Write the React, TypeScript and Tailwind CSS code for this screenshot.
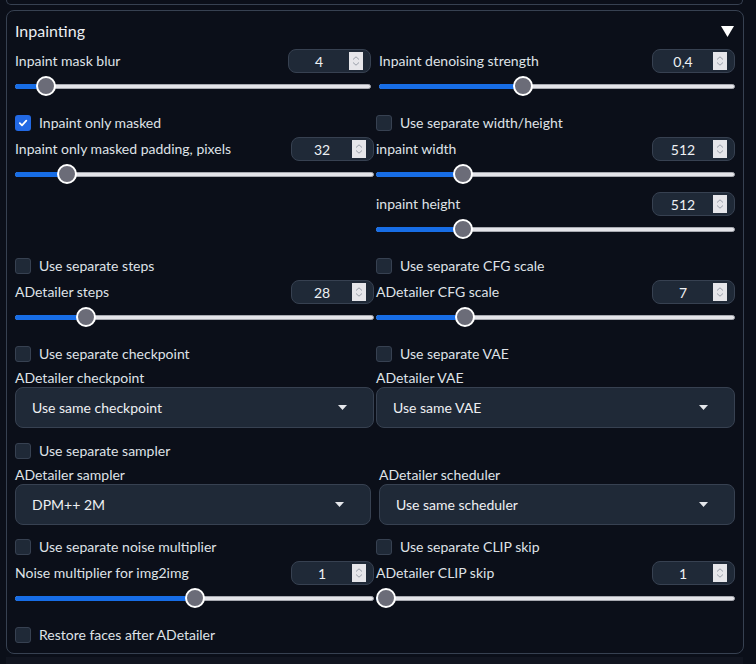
import React from "react";

const font = { fontFamily: "Lato, 'Liberation Sans', sans-serif" };

function Check({ label, checked = false }: { label: string; checked?: boolean }) {
  return (
    <div className="flex items-center h-4 gap-2">
      {checked ? (
        <div className="w-4 h-4 rounded-[3px] bg-[#2269e4] flex items-center justify-center">
          <svg width="10" height="10" viewBox="0 0 10 10">
            <path d="M1.8 5.2 L4 7.3 L8.3 2.6" stroke="white" strokeWidth="1.8" fill="none" strokeLinecap="round" strokeLinejoin="round" />
          </svg>
        </div>
      ) : (
        <div className="w-4 h-4 rounded-[3px] bg-[#1f2937] border border-[#374151]" />
      )}
      <span className="text-[14px] leading-none text-[#dfe2e7]">{label}</span>
    </div>
  );
}

function NumBox({ value }: { value: string }) {
  return (
    <div className="w-[83px] h-6 rounded-lg bg-[#1f2937] border border-[#374151] flex items-center pr-[7px]">
      <span className="flex-1 text-center text-[14px] text-[#eef0f3]">{value}</span>
      <div className="w-[14px] h-[18px] bg-[#e6e6ea] flex items-center justify-center">
        <svg width="8" height="12" viewBox="0 0 8 12">
          <path d="M1 4.5 L4 1.8 L7 4.5 M1 7.5 L4 10.2 L7 7.5" stroke="#9aa0aa" strokeWidth="1" fill="none" />
        </svg>
      </div>
    </div>
  );
}

function Slider({ label, value, pct }: { label: string; value: string; pct: number }) {
  return (
    <div>
      <div className="flex items-center justify-between h-6">
        <span className="text-[14px] text-[#dfe2e7] leading-none">{label}</span>
        <NumBox value={value} />
      </div>
      <div className="relative h-[26px] flex items-center">
        <div className="w-full h-[5px] rounded-full bg-[#e4e4e9] border border-[#a7a9b0]" />
        <div
          className="absolute left-0 h-[5px] rounded-l-full bg-[#176de6]"
          style={{ width: `calc(10px + ${pct} * (100% - 20px))` }}
        />
        <div
          className="absolute w-5 h-5 rounded-full bg-[#6b6c78] border-2 border-white"
          style={{ left: `calc(${pct} * (100% - 20px))` }}
        />
      </div>
    </div>
  );
}

function Dropdown({ label, value }: { label: string; value: string }) {
  return (
    <div>
      <div className="h-5 flex items-center text-[14px] text-[#dfe2e7]">{label}</div>
      <div className="h-[41px] rounded-lg bg-[#1f2937] border border-[#374151] flex items-center pl-4 pr-[26px] justify-between">
        <span className="text-[14px] text-[#eef0f3]">{value}</span>
        <svg width="9" height="5" viewBox="0 0 9 5">
          <path d="M0 0 L9 0 L4.5 5 Z" fill="#e5e7eb" />
        </svg>
      </div>
    </div>
  );
}

export default function App() {
  return (
    <div className="w-[756px] h-[664px] bg-[#0b0f19] overflow-hidden" style={font}>
      {/* bottom edge of previous block */}
      <div className="ml-[6px] w-[737px] h-[5px] border-x border-b border-[#374151] rounded-b-lg" />

      <div className="ml-[6px] mt-[5px] w-[738px] h-[644px] border border-[#374151] rounded-lg px-2 pt-[9px]">
        <div className="flex items-center justify-between h-[22px]">
          <span className="text-[16px] text-[#eceef2]">Inpainting</span>
          <svg width="13" height="11" viewBox="0 0 13 11" className="mr-[1px]">
            <path d="M0 0 L13 0 L6.5 11 Z" fill="#ffffff" />
          </svg>
        </div>

        <div className="grid grid-cols-2 gap-2 mt-[7px]">
          <Slider label="Inpaint mask blur" value="4" pct={0.0625} />
          <Slider label="Inpaint denoising strength" value="0,4" pct={0.4} />
        </div>

        <div className="grid grid-cols-2 gap-[2px] mt-4">
          <Check label="Inpaint only masked" checked />
          <Check label="Use separate width/height" />
        </div>

        <div className="grid grid-cols-2 gap-[2px] mt-[6px]">
          <Slider label="Inpaint only masked padding, pixels" value="32" pct={0.125} />
          <div className="flex flex-col gap-[5px]">
            <Slider label="inpaint width" value="512" pct={0.226} />
            <Slider label="inpaint height" value="512" pct={0.226} />
          </div>
        </div>

        <div className="grid grid-cols-2 gap-[2px] mt-4">
          <Check label="Use separate steps" />
          <Check label="Use separate CFG scale" />
        </div>

        <div className="grid grid-cols-2 gap-[2px] mt-[6px]">
          <Slider label="ADetailer steps" value="28" pct={0.181} />
          <Slider label="ADetailer CFG scale" value="7" pct={0.233} />
        </div>

        <div className="grid grid-cols-2 gap-[2px] mt-4">
          <Check label="Use separate checkpoint" />
          <Check label="Use separate VAE" />
        </div>

        <div className="grid grid-cols-2 gap-[2px] mt-[5px]">
          <Dropdown label="ADetailer checkpoint" value="Use same checkpoint" />
          <Dropdown label="ADetailer VAE" value="Use same VAE" />
        </div>

        <div className="mt-[15px]">
          <Check label="Use separate sampler" />
        </div>

        <div className="grid grid-cols-2 gap-2 mt-[5px]">
          <Dropdown label="ADetailer sampler" value="DPM++ 2M" />
          <Dropdown label="ADetailer scheduler" value="Use same scheduler" />
        </div>

        <div className="grid grid-cols-2 gap-[2px] mt-[14px]">
          <Check label="Use separate noise multiplier" />
          <Check label="Use separate CLIP skip" />
        </div>

        <div className="grid grid-cols-2 gap-[2px] mt-[6px]">
          <Slider label="Noise multiplier for img2img" value="1" pct={0.5} />
          <Slider label="ADetailer CLIP skip" value="1" pct={0} />
        </div>

        <div className="mt-4">
          <Check label="Restore faces after ADetailer" />
        </div>
      </div>

      <div className="ml-[6px] mt-[3px] w-[737px] h-4 bg-[#111520]" />
    </div>
  );
}
